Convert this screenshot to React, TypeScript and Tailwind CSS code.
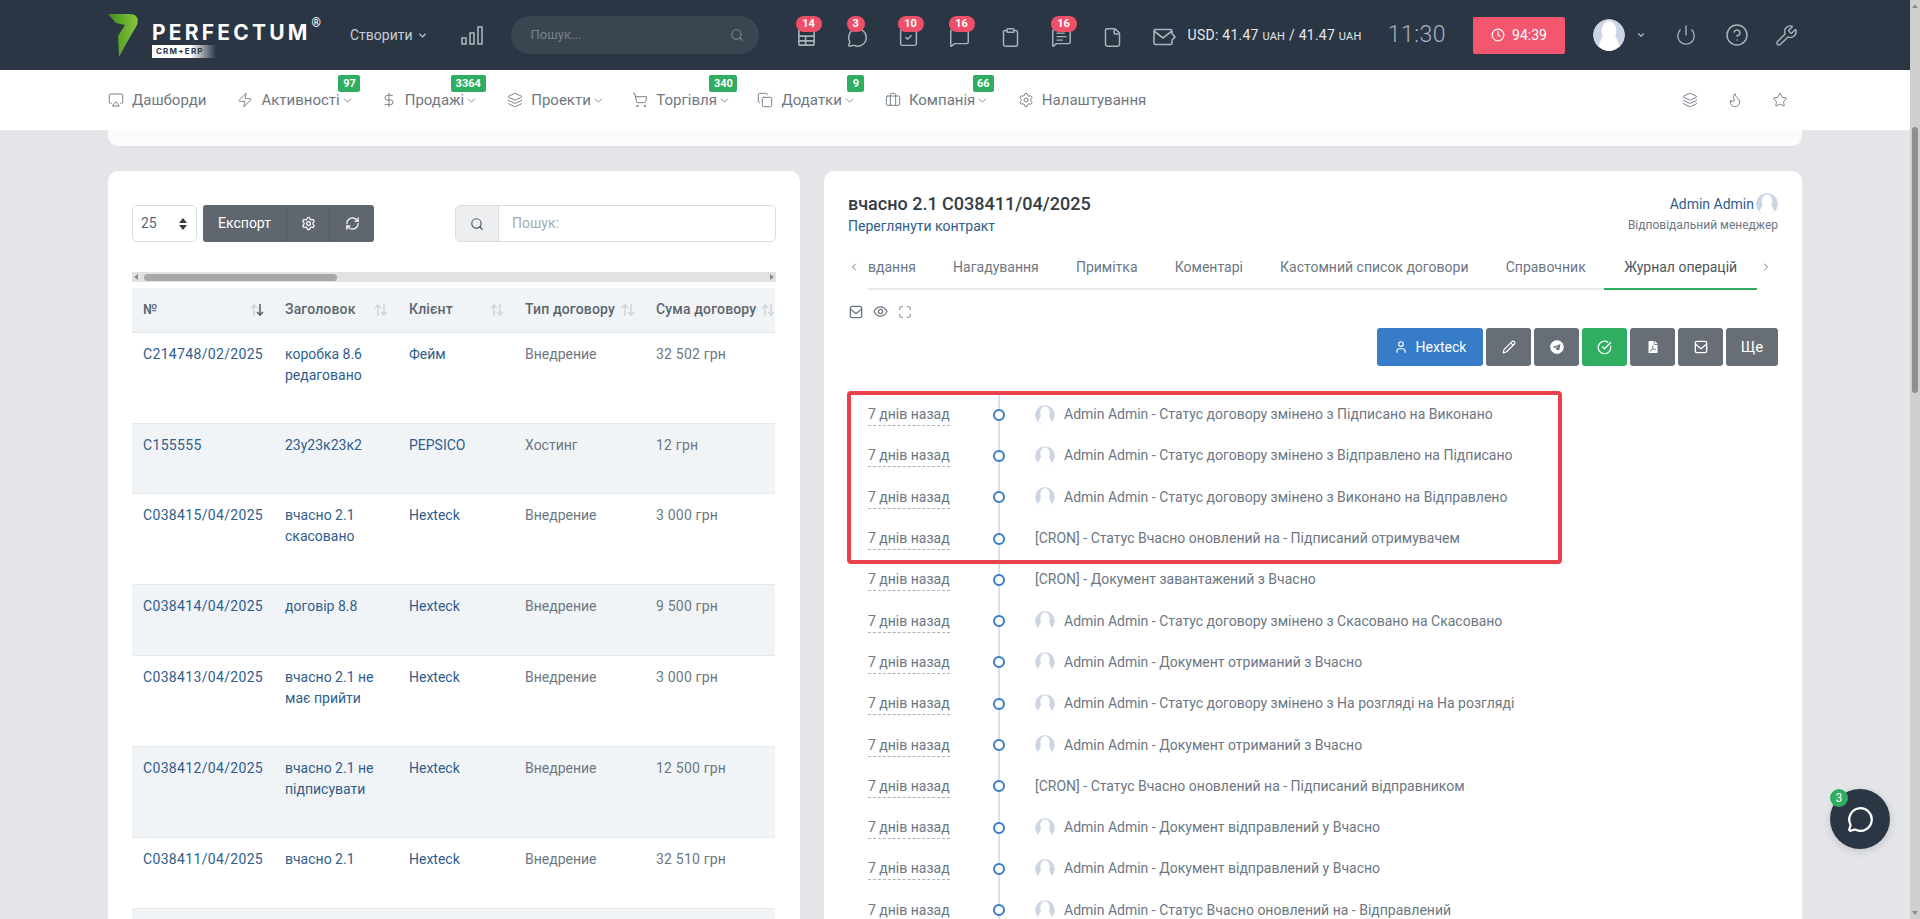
import React from "react";
import {
  Airplay, Briefcase, ChevronDown, ChevronLeft, ChevronRight, CircleCheckBig, CircleHelp, Clock,
  Clipboard, Copy, DollarSign, File, Flame, Layers, Maximize, MessageCircle, MessageSquare, MessageSquareText,
  Pencil, Power, RefreshCw, Search, Settings, ShoppingCart, SquareCheck, Star, User, Wrench, Zap,
} from "lucide-react";
import { FaFilePdf, FaTelegram } from "react-icons/fa";

const Avatar = ({ className }: { className: string }) => (
  <svg viewBox="0 0 32 32" className={className}>
    <circle cx="16" cy="16" r="16" fill="#cdd5e4" />
    <ellipse cx="16" cy="12" rx="7.500" ry="10" fill="#ffffff" />
    <path d="M9 18c-1 4-3 6-4 9 3 3 7 5 11 5s8-2 11-5c-1-3-3-5-4-9z" fill="#ffffff" />
  </svg>
);

const MailSquare = ({ className }: { className: string }) => (
  <svg viewBox="0 0 16 16" fill="none" stroke="currentColor" strokeWidth="1.5" className={className}>
    <rect x="1.5" y="1.5" width="13" height="13" rx="2" />
    <path d="M1.5 4.5 8 10l6.5-5.5" />
  </svg>
);

const headerIcons = [
  { icon: "table", badge: "14", pos: "w-[26px] left-[15px]" },
  { icon: "circle", badge: "3", pos: "w-[18px] left-[15px]" },
  { icon: "check", badge: "10", pos: "w-[26px] left-[15px]" },
  { icon: "msg", badge: "16", pos: "w-[26px] left-[15px]" },
  { icon: "clip", badge: "", pos: "" },
  { icon: "text", badge: "16", pos: "w-[26px] left-[15px]" },
  { icon: "file", badge: "", pos: "" },
];

const HeaderIcon = ({ name }: { name: string }) => {
  const cls = "h-[21px] w-[21px] text-[#a9b1ba]";
  if (name === "table")
    return (
      <svg viewBox="0 0 20 20" fill="none" stroke="currentColor" strokeWidth="1.7" className="h-[19px] w-[19px] text-[#a9b1ba]">
        <rect x="2" y="2" width="16" height="16" rx="1" />
        <path d="M2 8.500h16M2 13.500h16M9 8.500V18" />
      </svg>
    );
  if (name === "circle") return <MessageCircle strokeWidth={1.7} className={cls} />;
  if (name === "check") return <SquareCheck strokeWidth={1.7} className={cls} />;
  if (name === "msg") return <MessageSquare strokeWidth={1.7} className={cls} />;
  if (name === "clip") return <Clipboard strokeWidth={1.7} className={cls} />;
  if (name === "text") return <MessageSquareText strokeWidth={1.7} className={cls} />;
  return <File strokeWidth={1.7} className={cls} />;
};

const navItems = [
  { icon: Airplay, label: "Дашборди", gap: "mr-[31px]" },
  { icon: Zap, label: "Активності", badge: "97", badgePos: "left-[101px] w-[22px]", chev: true, gap: "mr-[27px]" },
  { icon: DollarSign, label: "Продажі", badge: "3364", badgePos: "left-[70px] w-[35px]", chev: true, gap: "mr-[29px]" },
  { icon: Layers, label: "Проекти", chev: true, gap: "mr-[27.5px]" },
  { icon: ShoppingCart, label: "Торгівля", badge: "340", badgePos: "left-[77px] w-[28px]", chev: true, gap: "mr-[26.5px]" },
  { icon: Copy, label: "Додатки", badge: "9", badgePos: "left-[90px] w-[17px]", chev: true, gap: "mr-[29px]" },
  { icon: Briefcase, label: "Компанія", badge: "66", badgePos: "left-[88px] w-[21px]", chev: true, gap: "mr-[28.5px]" },
  { icon: Settings, label: "Налаштування", gap: "" },
];

const rows = [
  { no: "C214748/02/2025", title: ["коробка 8.6", "редаговано"], client: "Фейм", type: "Внедрение", sum: "32 502 грн" },
  { no: "C155555", title: ["23у23к23к2"], client: "PEPSICO", type: "Хостинг", sum: "12 грн" },
  { no: "C038415/04/2025", title: ["вчасно 2.1", "скасовано"], client: "Hexteck", type: "Внедрение", sum: "3 000 грн" },
  { no: "C038414/04/2025", title: ["договір 8.8"], client: "Hexteck", type: "Внедрение", sum: "9 500 грн" },
  { no: "C038413/04/2025", title: ["вчасно 2.1 не", "має прийти"], client: "Hexteck", type: "Внедрение", sum: "3 000 грн" },
  { no: "C038412/04/2025", title: ["вчасно 2.1 не", "підписувати"], client: "Hexteck", type: "Внедрение", sum: "12 500 грн" },
  { no: "C038411/04/2025", title: ["вчасно 2.1"], client: "Hexteck", type: "Внедрение", sum: "32 510 грн" },
];

const timeline = [
  { admin: true, text: "Статус договору змінено з Підписано на Виконано" },
  { admin: true, text: "Статус договору змінено з Відправлено на Підписано" },
  { admin: true, text: "Статус договору змінено з Виконано на Відправлено" },
  { admin: false, text: "Статус Вчасно оновлений на - Підписаний отримувачем" },
  { admin: false, text: "Документ завантажений з Вчасно" },
  { admin: true, text: "Статус договору змінено з Скасовано на Скасовано" },
  { admin: true, text: "Документ отриманий з Вчасно" },
  { admin: true, text: "Статус договору змінено з На розгляді на На розгляді" },
  { admin: true, text: "Документ отриманий з Вчасно" },
  { admin: false, text: "Статус Вчасно оновлений на - Підписаний відправником" },
  { admin: true, text: "Документ відправлений у Вчасно" },
  { admin: true, text: "Документ відправлений у Вчасно" },
  { admin: true, text: "Статус Вчасно оновлений на - Відправлений" },
];

const SortHead = ({ label, active, last }: { label: string; active?: boolean; last?: boolean }) => (
  <div className={last ? "flex items-center justify-between" : "flex items-center justify-between pr-[10px]"}>
    <span className="whitespace-nowrap tracking-[0.15px]">{label}</span>
    <svg viewBox="0 0 14 14" fill="none" strokeWidth="1.6" className="h-[14px] w-[14px] shrink-0">
      <path d="M4 13V2M1 5l3-3 3 3" stroke="#cfd6dc" />
      <path d="M10 1v11M7 9l3 3 3-3" stroke={active ? "#5c6670" : "#cfd6dc"} />
    </svg>
  </div>
);

export default function App() {
  return (
    <div className="flex h-[919px] w-[1920px] overflow-hidden bg-[#e3e5e8] font-['Roboto',sans-serif] text-[14px] text-[#6c7783]">
      <div className="flex w-[1910px] flex-col">
        {/* Top bar */}
        <header className="flex h-[70px] shrink-0 items-center bg-[#2a3644] pl-[108px] text-[#c9ced4]">
          <div className="flex w-[242px] items-center">
            <svg viewBox="0 0 30 44" className="h-[44px] w-[30px]">
              <defs>
                <linearGradient id="lg" x1="0" y1="0" x2="1" y2="0">
                  <stop offset="0" stopColor="#3f8f1c" />
                  <stop offset="1" stopColor="#8ac53e" />
                </linearGradient>
              </defs>
              <path d="M0 1h22c7 0 9 5 7 11L18 31l-7 13-1-21 7-11-9-2z" fill="url(#lg)" />
            </svg>
            <div className="mt-[10px] ml-[14px] flex flex-col">
              <div className="flex items-start">
                <span className="font-['Inter',sans-serif] text-[21px] leading-[22px] font-bold tracking-[3.2px] text-white">PERFECTUM</span>
                <span className="-mt-[8px] ml-[1px] text-[12px] font-bold text-white">®</span>
              </div>
              <span className="mt-[1px] h-[13px] w-[64px] bg-gradient-to-r from-white from-60% to-transparent pl-[4px] font-['Inter',sans-serif] text-[8px] leading-[13px] font-bold tracking-[1.2px] text-[#2a3644]">
                CRM+ERP
              </span>
            </div>
          </div>
          <span className="text-[14px]">Створити</span>
          <ChevronDown strokeWidth={3} className="ml-[4px] h-[11px] w-[11px]" />
          <svg viewBox="0 0 22 20" fill="none" stroke="#a9b1ba" strokeWidth="1.6" className="ml-[33px] h-[20px] w-[22px]">
            <rect x="1" y="13" width="4" height="6" />
            <rect x="9" y="8" width="4" height="11" />
            <rect x="17" y="2" width="4" height="17" />
          </svg>
          <div className="ml-[28px] flex h-[38px] w-[248px] items-center justify-between rounded-full bg-[#3a4552] pr-[15px] pl-[20px] text-[13px] text-[#77818c]">
            <span>Пошук...</span>
            <Search className="h-[14px] w-[14px]" />
          </div>
          <div className="ml-[22px] flex">
            {headerIcons.map((item) => (
              <div key={item.icon} className="relative flex h-[70px] w-[51px] items-center justify-center pt-[4px]">
                <HeaderIcon name={item.icon} />
                {item.badge && (
                  <span className={`absolute top-[16px] h-[16px] rounded-full bg-[#ee4f69] text-center text-[11px] leading-[16px] font-bold text-white ${item.pos}`}>
                    {item.badge}
                  </span>
                )}
              </div>
            ))}
          </div>
          <div className="ml-[15px] flex w-[26px] items-center pt-[4px] text-[#a9b1ba]">
            <svg viewBox="0 0 26 18" fill="none" stroke="currentColor" strokeWidth="1.6" className="h-[18px] w-[26px]">
              <path d="M19 12v3a1.500 1.500 0 0 1-1.500 1.500h-15A1.500 1.500 0 0 1 1 15V3a1.500 1.500 0 0 1 1.500-1.500h15A1.500 1.500 0 0 1 19 3v2.500l3 3.500z" />
              <path d="M1 3l9 7 9-7" />
            </svg>
          </div>
          <span className="ml-[9px] whitespace-nowrap text-[14px] tracking-[0.25px] text-[#e4e7ea]">
            USD: 41.47 <span className="text-[11px]">UAH</span> / 41.47 <span className="text-[11px]">UAH</span>
          </span>
          <span className="ml-[26px] text-[23px] font-light tracking-[0.5px] text-[#a9b1ba]">11:30</span>
          <div className="ml-[27px] flex h-[37px] w-[92px] items-center justify-center gap-[7px] rounded-[2px] bg-[#f3566f] text-[14px] text-white">
            <Clock className="h-[14px] w-[14px]" />
            94:39
          </div>
          <Avatar className="ml-[28px] h-[32px] w-[32px] rounded-full" />
          <ChevronDown strokeWidth={3} className="ml-[11px] h-[10px] w-[10px] text-[#a9b1ba]" />
          <Power strokeWidth={1.5} className="ml-[29px] h-[22px] w-[22px] text-[#a9b1ba]" />
          <CircleHelp strokeWidth={1.5} className="ml-[28px] h-[24px] w-[24px] text-[#a9b1ba]" />
          <Wrench strokeWidth={1.5} className="ml-[26px] h-[23px] w-[23px] text-[#a9b1ba]" />
        </header>

        {/* Main nav */}
        <nav className="flex h-[60px] shrink-0 items-center bg-white pr-[122px] pl-[108px] text-[15px] text-[#6f7882]">
          {navItems.map((item) => (
            <div key={item.label} className={`relative flex items-center ${item.gap}`}>
              <item.icon strokeWidth={1.4} className="mr-[8px] h-[16px] w-[16px]" />
              <span className="whitespace-nowrap">{item.label}</span>
              {item.chev && <ChevronDown strokeWidth={1.5} className="ml-[1px] h-[13px] w-[13px]" />}
              {item.badge && (
                <span className={`absolute -top-[14px] h-[17px] rounded-[2px] bg-[#2fae62] text-center text-[11px] leading-[17px] font-bold text-white ${item.badgePos}`}>
                  {item.badge}
                </span>
              )}
            </div>
          ))}
          <div className="ml-auto flex items-center gap-[29px]">
            <Layers strokeWidth={1.4} className="h-[16px] w-[16px]" />
            <Flame strokeWidth={1.4} className="h-[16px] w-[16px]" />
            <Star strokeWidth={1.4} className="h-[16px] w-[16px]" />
          </div>
        </nav>

        <div className="flex flex-1 flex-col px-[108px]">
          {/* End of the card above */}
          <div className="h-[17px] shrink-0 rounded-b-[10px] border-b border-[#dfe1e4] bg-[#fbfbfb]" />

          <div className="mt-[24px] flex gap-[24px]">
            {/* Contracts table */}
            <section className="h-[900px] w-[692px] shrink-0 rounded-t-[10px] bg-white px-[24px] pt-[34px]">
              <div className="flex h-[37px] items-stretch">
                <div className="flex w-[65px] items-center justify-between rounded-[5px] border border-[#d9dde1] pr-[9px] pl-[8px] text-[14px] text-[#5b6570]">
                  25
                  <span className="flex flex-col gap-[2px]">
                    <span className="h-0 w-0 border-x-[4px] border-b-[5px] border-x-transparent border-b-[#343a40]" />
                    <span className="h-0 w-0 border-x-[4px] border-t-[5px] border-x-transparent border-t-[#343a40]" />
                  </span>
                </div>
                <div className="ml-[6px] flex overflow-hidden rounded-[3px] bg-[#5f666d] text-white">
                  <span className="flex w-[84px] items-center justify-center border-r border-[#545a61]">Експорт</span>
                  <span className="flex w-[43px] items-center justify-center border-r border-[#545a61]">
                    <Settings className="h-[15px] w-[15px]" />
                  </span>
                  <span className="flex w-[44px] items-center justify-center">
                    <RefreshCw className="h-[15px] w-[15px]" />
                  </span>
                </div>
                <div className="ml-auto flex w-[321px] overflow-hidden rounded-[5px] border border-[#d9dde1]">
                  <span className="flex w-[43px] items-center justify-center border-r border-[#d9dde1] bg-[#eceef0] text-[#4d5660]">
                    <Search className="h-[14px] w-[14px]" />
                  </span>
                  <span className="flex items-center pl-[13px] text-[#a3abb3]">Пошук:</span>
                </div>
              </div>

              <div className="mt-[30px] flex h-[10px] items-center bg-[#e2e2e2] px-[2px]">
                <span className="h-0 w-0 border-y-[3px] border-r-[4px] border-y-transparent border-r-[#8c8c8c]" />
                <div className="ml-[6px] h-[7px] w-[193px] rounded-full bg-[#a8a8a8]" />
                <span className="ml-auto h-0 w-0 border-y-[3px] border-l-[4px] border-y-transparent border-l-[#8c8c8c]" />
              </div>

              <table className="mt-[6px] w-[643px] table-fixed border-collapse">
                <colgroup>
                  <col className="w-[142px]" />
                  <col className="w-[124px]" />
                  <col className="w-[116px]" />
                  <col className="w-[131px]" />
                  <col className="w-[130px]" />
                </colgroup>
                <thead>
                  <tr className="h-[44px] border-b border-[#dfe3e7] bg-[#f1f4f7] text-left font-medium text-[#5c6670]">
                    <th className="pl-[11px] font-medium"><SortHead label="№" active /></th>
                    <th className="pl-[11px] font-medium"><SortHead label="Заголовок" /></th>
                    <th className="pl-[11px] font-medium"><SortHead label="Клієнт" /></th>
                    <th className="pl-[11px] font-medium"><SortHead label="Тип договору" /></th>
                    <th className="pl-[11px] font-medium"><SortHead label="Сума договору" last /></th>
                  </tr>
                </thead>
                <tbody className="leading-[21px]">
                  {rows.map((row, idx) => (
                    <tr key={row.no} className={idx % 2 ? "border-t border-[#e6e9ec] bg-[#f1f4f7]" : "border-t border-[#e6e9ec] bg-white"}>
                      <td className="h-[69px] pt-[11px] pb-[37.3px] pl-[11px] align-top tracking-[0.33px] text-[#2f5d8c]">{row.no}</td>
                      <td className="pt-[11px] pb-[37.3px] pl-[11px] align-top text-[#2f5d8c]">
                        {row.title.map((line) => (
                          <div key={line}>{line}</div>
                        ))}
                      </td>
                      <td className="pt-[11px] pb-[37.3px] pl-[11px] align-top text-[#2f5d8c]">{row.client}</td>
                      <td className="pt-[11px] pb-[37.3px] pl-[11px] align-top">{row.type}</td>
                      <td className="pt-[11px] pb-[37.3px] pl-[11px] align-top tracking-[0.2px]">{row.sum}</td>
                    </tr>
                  ))}
                  <tr className="border-t border-[#e6e9ec] bg-[#f1f4f7]">
                    <td colSpan={5} className="h-[70px]" />
                  </tr>
                </tbody>
              </table>
            </section>

            {/* Contract details */}
            <section className="h-[900px] w-[978px] shrink-0 rounded-t-[10px] bg-white px-[24px] pt-[22px]">
              <div className="flex items-start justify-between">
                <div>
                  <h2 className="text-[18px] leading-[22px] font-medium text-[#333c46]">вчасно 2.1 C038411/04/2025</h2>
                  <a className="mt-[1px] block leading-[20px] text-[#2f5d8c]">Переглянути контракт</a>
                </div>
                <div className="flex flex-col items-end">
                  <div className="flex items-center gap-[2px] text-[#2f5d8c]">
                    Admin Admin
                    <Avatar className="h-[22px] w-[22px] rounded-full" />
                  </div>
                  <span className="text-[12px] leading-[20px]">Відповідальний менеджер</span>
                </div>
              </div>

              <div className="mt-[10px] flex h-[44px] items-center">
                <ChevronLeft className="mr-[8px] h-[12px] w-[12px] shrink-0 -translate-y-[1px]" />
                <div className="flex h-[44px] w-[889px] shrink-0 items-stretch border-b-2 border-[#e9ebed]">
                  {["вдання", "Нагадування", "Примітка", "Коментарі", "Кастомний список договори", "Справочник"].map((tab, i) => (
                    <span key={tab} className={i ? "flex items-center px-[18.6px] whitespace-nowrap" : "flex items-center pr-[18.6px] whitespace-nowrap"}>
                      {tab}
                    </span>
                  ))}
                  <span className="-mb-[2px] flex flex-1 items-center justify-center border-b-2 border-[#2fae62] whitespace-nowrap text-[#4d5660]">Журнал операцій</span>
                </div>
                <ChevronRight className="ml-[3px] h-[12px] w-[12px] shrink-0 -translate-y-[1px]" />
              </div>

              <div className="mt-[14px] flex items-center gap-[10px] pl-[1px]">
                <MailSquare className="h-[14px] w-[14px]" />
                <svg viewBox="0 0 16 16" fill="none" stroke="currentColor" strokeWidth="1.3" className="h-[15px] w-[15px]">
                  <path d="M1 8c2-3.500 4.500-5 7-5s5 1.500 7 5c-2 3.500-4.500 5-7 5s-5-1.500-7-5z" />
                  <circle cx="8" cy="8" r="2.200" />
                </svg>
                <Maximize strokeWidth={1.5} className="h-[14px] w-[14px]" />
              </div>

              <div className="mt-[9px] flex h-[38px] justify-end gap-[3px] text-white">
                <span className="flex w-[106px] items-center justify-center gap-[8px] rounded-[3px] bg-[#377cc9]">
                  <User className="h-[14px] w-[14px]" />
                  Hexteck
                </span>
                <span className="flex w-[45px] items-center justify-center rounded-[3px] bg-[#686e75]">
                  <Pencil className="h-[14px] w-[14px]" />
                </span>
                <span className="flex w-[45px] items-center justify-center rounded-[3px] bg-[#686e75]">
                  <FaTelegram className="h-[14px] w-[14px]" />
                </span>
                <span className="flex w-[45px] items-center justify-center rounded-[3px] bg-[#2fae62]">
                  <CircleCheckBig className="h-[15px] w-[15px]" />
                </span>
                <span className="flex w-[45px] items-center justify-center rounded-[3px] bg-[#686e75]">
                  <FaFilePdf className="h-[12px] w-[12px]" />
                </span>
                <span className="flex w-[45px] items-center justify-center rounded-[3px] bg-[#686e75]">
                  <MailSquare className="h-[14px] w-[14px]" />
                </span>
                <span className="flex w-[52px] items-center justify-center rounded-[3px] bg-[#686e75] text-[15px]">Ще</span>
              </div>

              {/* Activity log */}
              <div className="relative mt-[28px]">
                {timeline.map((entry, i) => (
                  <div key={i} className="flex h-[41.3px] items-center">
                    <span className="ml-[20px] w-[121px] shrink-0">
                      <span className="border-b border-dashed border-[#aab2bb] pb-[3px]">7 днів назад</span>
                    </span>
                    <span className="relative flex h-full w-[20px] shrink-0 items-center justify-center">
                      <span className="absolute inset-y-0 left-[9px] w-[2px] bg-[#d7e2ee]" />
                      <span className="relative h-[12px] w-[12px] rounded-full border-2 border-[#377cc9] bg-white" />
                    </span>
                    <span className="ml-[26px] flex items-center whitespace-nowrap">
                      {entry.admin && <Avatar className="mr-[9px] h-[20px] w-[20px] rounded-full" />}
                      {entry.admin ? "Admin Admin" : "[CRON]"} - {entry.text}
                    </span>
                  </div>
                ))}
                <div className="pointer-events-none absolute -top-[3px] -left-[1px] h-[173px] w-[715px] rounded-[4px] border-4 border-[#e8414c]" />
              </div>
            </section>
          </div>
        </div>
      </div>

      {/* Page scrollbar */}
      <div className="flex w-[10px] shrink-0 flex-col items-center bg-[#cfcfcf]">
        <span className="mt-[4px] h-0 w-0 border-x-[3px] border-b-[4px] border-x-transparent border-b-[#8c8c8c]" />
        <div className="mt-[119px] h-[266px] w-[6px] rounded-full bg-[#8f8f8f]" />
        <span className="mt-auto mb-[4px] h-0 w-0 border-x-[3px] border-t-[4px] border-x-transparent border-t-[#8c8c8c]" />
      </div>

      {/* Chat bubble */}
      <div className="fixed top-[789px] left-[1830px] flex h-[60px] w-[60px] items-center justify-center rounded-full bg-[#2a3644] shadow-[0_2px_8px_rgba(0,0,0,0.15)]">
        <MessageCircle strokeWidth={2} className="h-[27px] w-[27px] text-white" />
        <span className="absolute top-0 left-0 h-[18px] w-[18px] rounded-full bg-[#2fae62] text-center text-[12px] leading-[18px] text-white">3</span>
      </div>
    </div>
  );
}
